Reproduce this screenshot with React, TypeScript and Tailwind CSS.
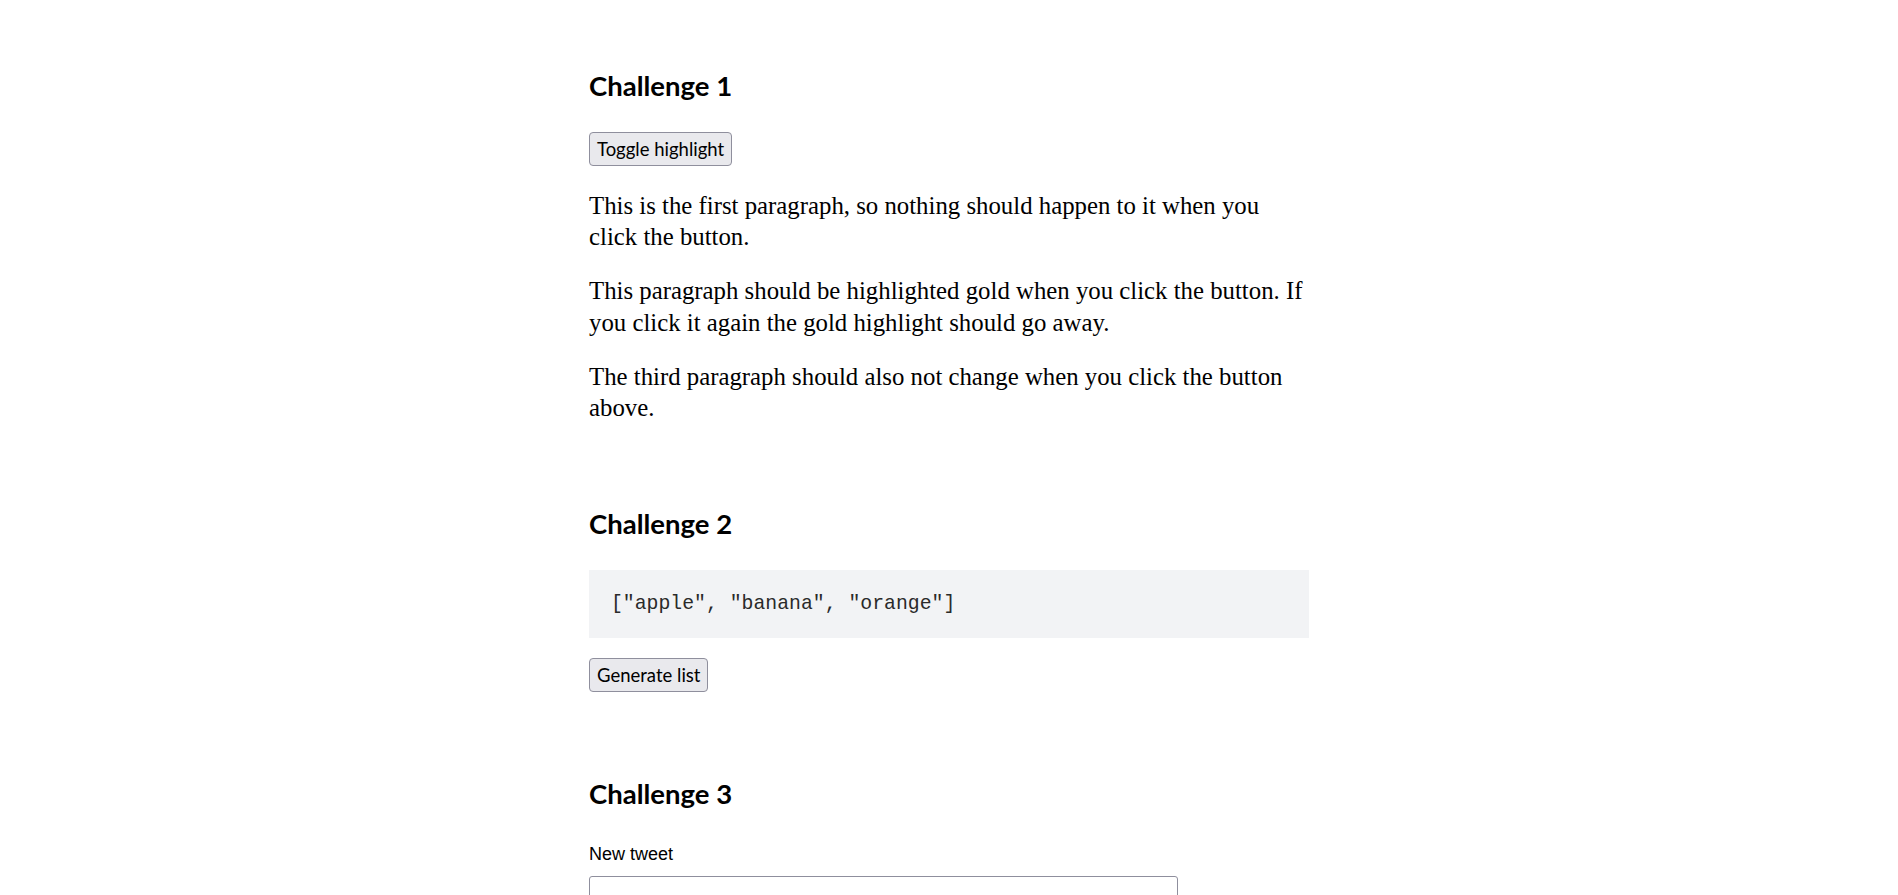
import React from "react";

const headingCls =
  "font-['Lato','Noto_Sans',sans-serif] font-bold text-[27.5px] leading-[36px] text-black";
const btnCls =
  "h-[34px] px-[7px] rounded-[4px] border border-[#8f8f9d] bg-[#e9e9ed] font-['Lato','Noto_Sans',sans-serif] text-[18.5px] leading-none text-black";
const pCls =
  "font-['Liberation_Serif','Times_New_Roman',serif] text-[24.8px] leading-[31.5px] text-black";

export default function App() {
  return (
    <div className="min-h-screen bg-white">
      <main className="mx-auto w-[720px] pt-[68px]">
        <section className="flex flex-col items-start">
          <h2 className={headingCls}>Challenge 1</h2>
          <button className={`mt-[28px] ${btnCls}`}>Toggle highlight</button>
          <p className={`mt-[23.5px] ${pCls}`}>
            This is the first paragraph, so nothing should happen to it when you click the button.
          </p>
          <p className={`mt-[22.5px] ${pCls}`}>
            This paragraph should be highlighted gold when you click the button. If you click it again the gold highlight should go away.
          </p>
          <p className={`mt-[22.5px] ${pCls}`}>
            The third paragraph should also not change when you click the button above.
          </p>
        </section>

        <section className="mt-[82.5px] flex flex-col items-start">
          <h2 className={headingCls}>Challenge 2</h2>
          <pre className="mt-[28px] w-full bg-[#f2f3f5] pl-[22px] pr-6 py-[22px] font-['Liberation_Mono','Courier_New',monospace] text-[19.8px] leading-6 text-[#2a2a2a]">
            {'["apple", "banana", "orange"]'}
          </pre>
          <button className={`mt-[20px] ${btnCls}`}>Generate list</button>
        </section>

        <section className="mt-[84px] flex flex-col items-start">
          <h2 className={headingCls}>Challenge 3</h2>
          <label className="mt-[30px] font-['Liberation_Sans',Arial,sans-serif] text-[18px] leading-6 text-black">
            New tweet
          </label>
          <textarea className="mt-[10px] h-[100px] w-[589px] resize-none rounded-[3px] border border-[#8f8f9d] bg-white" />
        </section>
      </main>
    </div>
  );
}
